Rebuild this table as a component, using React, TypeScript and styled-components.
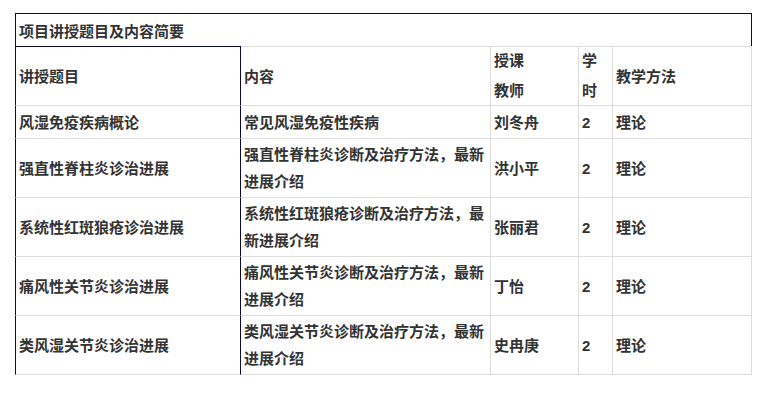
import { Fragment } from 'react';
import styled, { createGlobalStyle } from 'styled-components';

const DARK = '#0b0b3b';
const GRAY = '#dddddd';

const GlobalStyle = createGlobalStyle`
  html, body {
    margin: 0;
    padding: 0;
    background: #ffffff;
  }
`;

const Page = styled.div`
  padding: 13px 0 0 15px;
`;

const Table = styled.div`
  display: grid;
  grid-template-columns: 226px 250px 88px 34px 139px;
  grid-template-rows: 33px 60px 33px repeat(4, 59px);
  width: 737px;
  font-family: "Liberation Sans", "Noto Sans CJK SC", sans-serif;
  font-size: 15px;
  font-weight: 700;
  color: #333333;
`;

const Cell = styled.div<{ $first?: boolean; $top?: string; $lh?: number }>`
  box-sizing: border-box;
  display: flex;
  align-items: center;
  padding: 0 3px;
  line-height: ${(p) => p.$lh ?? 27}px;
  border-right: 1px solid ${(p) => (p.$first ? DARK : GRAY)};
  border-bottom: 1px solid ${GRAY};
  ${(p) => (p.$first ? `border-left: 1px solid ${DARK};` : '')}
  ${(p) => (p.$top ? `border-top: 1px solid ${p.$top};` : '')}
`;

const Title = styled.div`
  grid-column: 1 / -1;
  box-sizing: border-box;
  display: flex;
  align-items: center;
  padding: 0 3px;
  border: 1px solid ${DARK};
  border-bottom: none;
`;

const rows = [
  { topic: '风湿免疫疾病概论', content: '常见风湿免疫性疾病', teacher: '刘冬舟' },
  { topic: '强直性脊柱炎诊治进展', content: '强直性脊柱炎诊断及治疗方法，最新进展介绍', teacher: '洪小平' },
  { topic: '系统性红斑狼疮诊治进展', content: '系统性红斑狼疮诊断及治疗方法，最新进展介绍', teacher: '张丽君' },
  { topic: '痛风性关节炎诊治进展', content: '痛风性关节炎诊断及治疗方法，最新进展介绍', teacher: '丁怡' },
  { topic: '类风湿关节炎诊治进展', content: '类风湿关节炎诊断及治疗方法，最新进展介绍', teacher: '史冉庚' },
];

function App() {
  return (
    <Page>
      <GlobalStyle />
      <Table>
        <Title>项目讲授题目及内容简要</Title>

        <Cell $first $top={DARK}>讲授题目</Cell>
        <Cell $top={GRAY}>内容</Cell>
        <Cell $top={GRAY} $lh={30}>
          <span>
            授课
            <br />
            教师
          </span>
        </Cell>
        <Cell $top={GRAY} $lh={30}>
          <span>
            学
            <br />
            时
          </span>
        </Cell>
        <Cell $top={GRAY}>教学方法</Cell>

        {rows.map((r) => (
          <Fragment key={r.topic}>
            <Cell $first>{r.topic}</Cell>
            <Cell>{r.content}</Cell>
            <Cell>{r.teacher}</Cell>
            <Cell>2</Cell>
            <Cell>理论</Cell>
          </Fragment>
        ))}
      </Table>
    </Page>
  );
}

export default App;
